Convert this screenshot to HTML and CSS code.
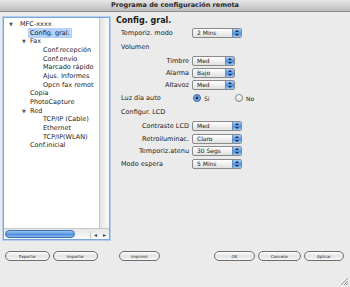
FILE: index.html
```html
<!DOCTYPE html>
<html>
<head>
    <title>Programa de configuración remota</title>
    <link rel="stylesheet" href="styles.css">
</head>
<body>
    <div class="window">
        <div class="titlebar">Programa de configuración remota</div>

        <div class="main">
            <div class="sidebar">
                <div class="tree">
                    <div class="node lvl0"><span class="arrow">▼</span>MFC-xxxx</div>
                    <div class="node lvl1"><span class="selected">Config. gral.</span></div>
                    <div class="node lvl1 parent"><span class="arrow">▼</span>Fax</div>
                    <div class="node lvl2">Conf.recepción</div>
                    <div class="node lvl2">Conf.envío</div>
                    <div class="node lvl2">Marcado rápido</div>
                    <div class="node lvl2">Ajus. Informes</div>
                    <div class="node lvl2">Opcn fax remot</div>
                    <div class="node lvl1">Copia</div>
                    <div class="node lvl1">PhotoCapture</div>
                    <div class="node lvl1 parent"><span class="arrow">▼</span>Red</div>
                    <div class="node lvl2">TCP/IP (Cable)</div>
                    <div class="node lvl2">Ethernet</div>
                    <div class="node lvl2">TCP/IP(WLAN)</div>
                    <div class="node lvl1">Conf.inicial</div>
                </div>
                <div class="vscroll"></div>
                <div class="hscroll">
                    <div class="thumb"></div>
                    <div class="track"></div>
                    <div class="arrows"><span>◂</span><span>▸</span></div>
                </div>
            </div>

            <div class="panel">
                <div class="row heading">Config. gral.</div>
                <div class="row m1">
                    <span class="label">Temporiz. modo</span>
                    <span class="select wide">2 Mins<i></i></span>
                </div>
                <div class="row m2"><span class="label">Volumen</span></div>
                <div class="row m2">
                    <span class="label right">Timbre</span>
                    <span class="select">Med<i></i></span>
                </div>
                <div class="row">
                    <span class="label right">Alarma</span>
                    <span class="select">Bajo<i></i></span>
                </div>
                <div class="row">
                    <span class="label right">Altavoz</span>
                    <span class="select">Med<i></i></span>
                </div>
                <div class="row m1">
                    <span class="label">Luz día auto</span>
                    <span class="radio on"></span><span class="opt">Si</span>
                    <span class="radio"></span><span class="opt">No</span>
                </div>
                <div class="row m2"><span class="label">Configur. LCD</span></div>
                <div class="row m2">
                    <span class="label right">Contraste LCD</span>
                    <span class="select wide">Med<i></i></span>
                </div>
                <div class="row m1">
                    <span class="label right">Retroiluminac.</span>
                    <span class="select wide">Claro<i></i></span>
                </div>
                <div class="row">
                    <span class="label right">Temporiz.atenu</span>
                    <span class="select wide">30 Segs<i></i></span>
                </div>
                <div class="row m1">
                    <span class="label">Modo espera</span>
                    <span class="select wide">5 Mins<i></i></span>
                </div>
            </div>
        </div>

        <div class="footer">
            <button class="btn w45">Exportar</button>
            <button class="btn w45">Importar</button>
            <button class="btn w41 print">Imprimir</button>
            <button class="btn w41 ok">OK</button>
            <button class="btn w43">Cancelar</button>
            <button class="btn w40">Aplicar</button>
        </div>
        <div class="grip"></div>
    </div>
</body>
</html>
```

FILE: styles.css
```css
body {
    margin: 0;
    background-color: #ebebeb;
    font-family: "DejaVu Sans", sans-serif;
    color: #1a1a1a;
}

.window {
    width: 350px;
    height: 287px;
    position: relative;
    overflow: hidden;
}

.titlebar {
    height: 11px;
    line-height: 11px;
    border-bottom: 1px solid #8e8e8e;
    background: linear-gradient(#e6e6e6, #bcbcbc);
    text-align: center;
    font-size: 6.5px;
    font-weight: bold;
    color: #2a2a2a;
}

.main {
    display: flex;
}

/* left tree */
.sidebar {
    width: 105px;
    height: 221px;
    margin: 5px 0 0 3px;
    border: 1px solid #7aa7de;
    box-shadow: 0 0 0 1px #b5cff0;
    background-color: #fff;
    position: relative;
}

.tree {
    padding-top: 2px;
    font-size: 6.5px;
    line-height: 8.65px;
}

.node {
    white-space: nowrap;
}

.lvl0 { padding-left: 5px; }
.lvl1 { padding-left: 26px; }
.lvl2 { padding-left: 39px; }
.lvl1.parent { padding-left: 18px; }

.arrow {
    display: inline-block;
    width: 11px;
    font-size: 5px;
    color: #555;
}

.lvl1.parent .arrow {
    width: 8px;
}

.selected {
    background-color: #b5d3ff;
    padding: 1px 2px;
    margin-left: -2px;
}

.vscroll {
    position: absolute;
    right: 0;
    top: 0;
    bottom: 10px;
    width: 9px;
    border-left: 1px solid #c8c8c8;
    background: linear-gradient(90deg, #e4e4e4, #fafafa);
}

.hscroll {
    position: absolute;
    left: 0;
    right: 0;
    bottom: 0;
    height: 10px;
    border-top: 1px solid #c8c8c8;
    display: flex;
    align-items: center;
    background: linear-gradient(#e6e6e6, #fafafa);
}

.hscroll .thumb {
    width: 68px;
    height: 6px;
    margin-left: 1px;
    border-radius: 4px;
    border: 1px solid #3d6fb3;
    background: linear-gradient(#9cc6f2, #4f8edb 60%, #8dbdf0);
}

.hscroll .track {
    flex: 1;
}

.hscroll .arrows {
    width: 18px;
    display: flex;
    justify-content: space-around;
    font-size: 6px;
    color: #444;
    border-left: 1px solid #c8c8c8;
}

/* right panel */
.panel {
    padding: 2px 0 0 7px;
    font-size: 6.5px;
    flex: 1;
}

.row {
    height: 12px;
    display: flex;
    align-items: center;
}

.row.m1 { margin-top: 1px; }
.row.m2 { margin-top: 2px; }

.heading {
    font-size: 8px;
    font-weight: bold;
    margin-left: -1px;
}

.label {
    width: 68px;
    margin-left: 4px;
    margin-right: 3px;
    white-space: nowrap;
}

.label.right {
    text-align: right;
}

.select {
    position: relative;
    width: 37px;
    height: 8px;
    line-height: 8px;
    padding-left: 4px;
    border: 1px solid #8a8a8a;
    border-radius: 2px;
    background: linear-gradient(#ffffff, #e0e0e0);
    font-size: 6px;
    box-sizing: content-box;
}

.select.wide {
    width: 44px;
}

.select i {
    position: absolute;
    right: 0;
    top: 0;
    width: 8px;
    height: 8px;
    border-left: 1px solid #6b8fc0;
    border-radius: 0 1px 1px 0;
    background: linear-gradient(#a9cdf5, #4f90e0 55%, #9ac6f4);
}

.select i::before,
.select i::after {
    content: "";
    position: absolute;
    left: 2px;
    border-left: 2px solid transparent;
    border-right: 2px solid transparent;
}

.select i::before {
    top: 1px;
    border-bottom: 2px solid #1b2d4a;
}

.select i::after {
    bottom: 1px;
    border-top: 2px solid #1b2d4a;
}

.radio {
    width: 6px;
    height: 6px;
    border-radius: 50%;
    border: 1px solid #888;
    background: linear-gradient(#fdfdfd, #dcdcdc);
    margin-left: 1px;
    position: relative;
}

.radio.on {
    border-color: #35609c;
    background: radial-gradient(circle, #1c2a40 0 1.3px, #5b95de 1.6px, #a9cdf5);
}

.opt {
    margin-left: 3px;
    width: 30px;
    font-size: 6px;
}

/* buttons */
.footer {
    display: flex;
    margin: 11px 0 0 5px;
}

.btn {
    height: 10px;
    padding: 0;
    margin-right: 3px;
    border: 1px solid #6e6e6e;
    border-radius: 5px;
    background: linear-gradient(#ffffff, #e4e4e4 50%, #f6f6f6);
    font-family: "DejaVu Sans", sans-serif;
    font-size: 4px;
    color: #222;
}

.w45 { width: 45px; }
.w41 { width: 41px; }
.w43 { width: 43px; }
.w40 { width: 40px; }

.btn.print { margin-left: 18px; }
.btn.ok { margin-left: 51px; }

.grip {
    position: absolute;
    right: 2px;
    bottom: 2px;
    width: 7px;
    height: 7px;
    background: linear-gradient(135deg, transparent 45%, #999 45% 52%, transparent 52% 65%, #999 65% 72%, transparent 72% 85%, #999 85% 92%, transparent 92%);
}
```
